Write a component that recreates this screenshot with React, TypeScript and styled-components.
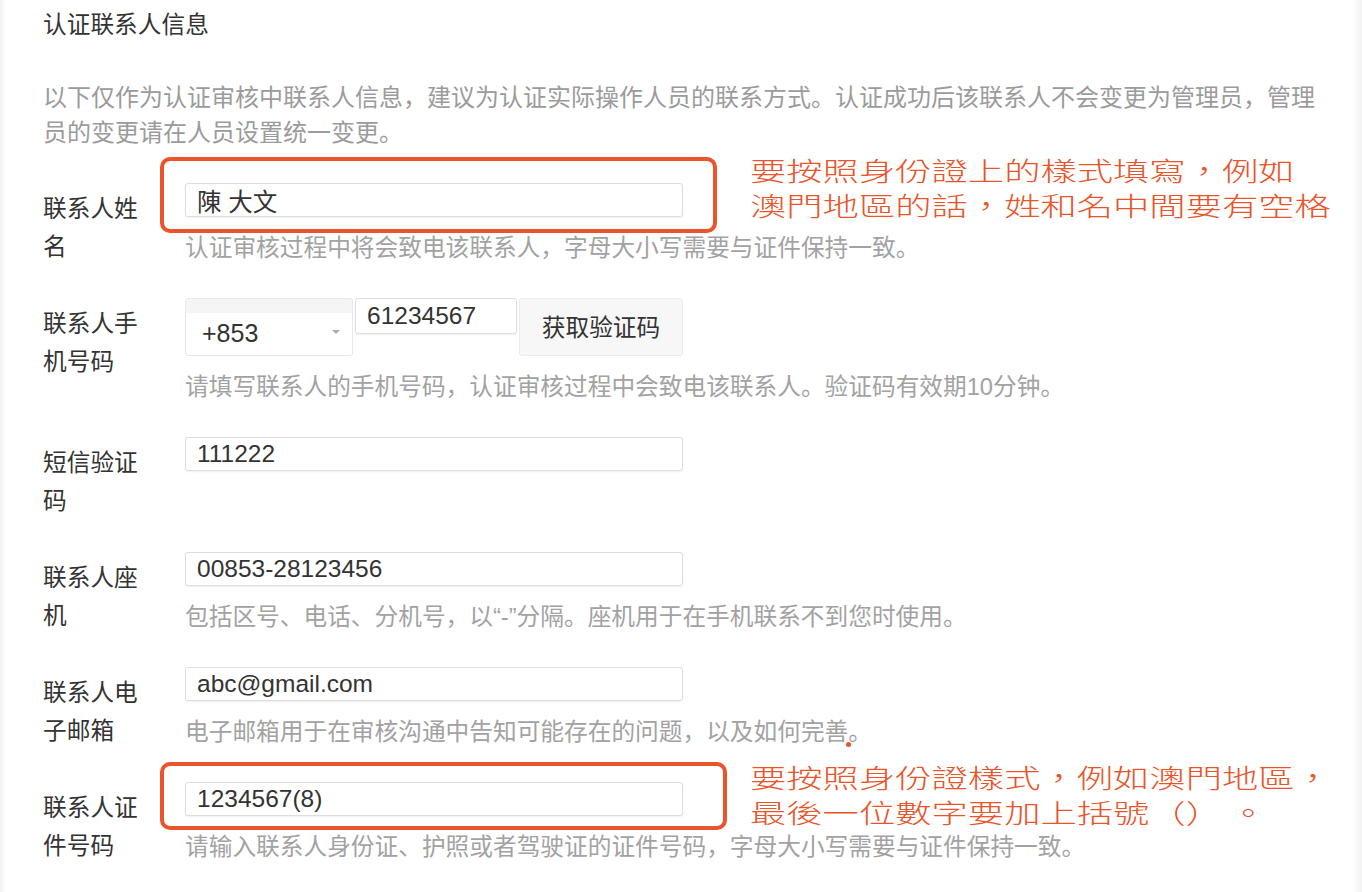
import React from "react";
import styled, { createGlobalStyle } from "styled-components";

const ORANGE = "#e9542a";

const GlobalStyle = createGlobalStyle`
  html, body { margin: 0; padding: 0; background: #ffffff; }
  body {
    font-family: "Liberation Sans", "Noto Sans CJK SC", sans-serif;
    color: #333333;
  }
  * { box-sizing: border-box; }
`;

const Page = styled.div`
  position: relative;
  width: 1362px;
  height: 892px;
  overflow: hidden;
  padding: 0 0 0 43px;
  background: #fff;
  &::before, &::after {
    content: "";
    position: absolute;
    top: 0;
    bottom: 0;
    width: 6px;
  }
  &::before { left: 0; background: linear-gradient(to right, #f1f1f1, #ffffff); }
  &::after { right: 0; width: 10px; background: linear-gradient(to left, #f3f3f3, #ffffff); }
`;

const Title = styled.h2`
  margin: 0;
  font-size: 23.7px;
  font-weight: normal;
  line-height: 51px;
  color: #333;
`;

const Desc = styled.p`
  margin: 29px 0 0;
  max-width: 1285px;
  font-size: 24px;
  line-height: 35px;
  color: #9b9b9b;
`;

const Form = styled.div`
  margin-top: 33px;
  display: flex;
  flex-direction: column;
  gap: 32px;
`;

const Row = styled.div`
  display: grid;
  grid-template-columns: 100px 1fr;
  column-gap: 42px;
  align-items: start;
`;

const Label = styled.div`
  padding-top: 7px;
  font-size: 23.7px;
  line-height: 38px;
  color: #333;
  word-break: break-all;
`;

const Field = styled.div`
  display: flex;
  flex-direction: column;
`;

const Input = styled.div<{ $w?: number; $h?: number }>`
  width: ${(p) => p.$w ?? 498}px;
  height: ${(p) => p.$h ?? 34}px;
  border: 1px solid #dedede;
  border-radius: 3px;
  box-shadow: 0 1px 2px rgba(0, 0, 0, 0.06);
  padding: 0 11px;
  display: flex;
  align-items: center;
  font-size: 24.5px;
  color: #333;
  background: #fff;
  white-space: nowrap;
`;

const Hint = styled.div`
  margin-top: 13px;
  font-size: 23.7px;
  line-height: 36px;
  color: #a2a2a2;
  white-space: nowrap;
`;

const PhoneGroup = styled.div`
  display: flex;
  gap: 2px;
  align-items: flex-start;
`;

const Select = styled.div`
  position: relative;
  width: 168px;
  height: 58px;
  border: 1px solid #e8e8e8;
  border-radius: 3px;
  background: linear-gradient(#f4f5f7 0, #f4f5f7 14px, #ffffff 14px);
  padding: 17px 0 0 16px;
  font-size: 25px;
  line-height: 34px;
  color: #333;
  &::after {
    content: "";
    position: absolute;
    right: 12px;
    top: 31px;
    border-left: 4px solid transparent;
    border-right: 4px solid transparent;
    border-top: 4px solid #aaa;
  }
`;

const CodeButton = styled.div`
  width: 164px;
  height: 58px;
  border: 1px solid #ececec;
  border-radius: 3px;
  background: #f7f7f7;
  display: flex;
  align-items: center;
  justify-content: center;
  padding-bottom: 2px;
  font-size: 23.7px;
  color: #333;
`;

const Box = styled.div<{ $l: number; $t: number; $w: number; $h: number }>`
  position: absolute;
  left: ${(p) => p.$l}px;
  top: ${(p) => p.$t}px;
  width: ${(p) => p.$w}px;
  height: ${(p) => p.$h}px;
  border: 4px solid ${ORANGE};
  border-radius: 10px;
  pointer-events: none;
`;

const Note = styled.div<{ $l: number; $t: number }>`
  position: absolute;
  left: ${(p) => p.$l}px;
  top: ${(p) => p.$t}px;
  font-family: "Noto Sans CJK TC", "Noto Sans CJK SC", sans-serif;
  font-size: 26.5px;
  font-weight: 300;
  line-height: 35px;
  color: ${ORANGE};
  white-space: nowrap;
  transform: scaleX(1.37);
  transform-origin: left top;
`;

const Dot = styled.div`
  position: absolute;
  left: 846px;
  top: 742px;
  width: 5px;
  height: 5px;
  border-radius: 50%;
  background: ${ORANGE};
`;

type RowDef = { label: string; value: string; hint?: string };

const rowsAfter: RowDef[] = [
  { label: "短信验证码", value: "111222" },
  {
    label: "联系人座机",
    value: "00853-28123456",
    hint: "包括区号、电话、分机号，以“-”分隔。座机用于在手机联系不到您时使用。",
  },
  {
    label: "联系人电子邮箱",
    value: "abc@gmail.com",
    hint: "电子邮箱用于在审核沟通中告知可能存在的问题，以及如何完善。",
  },
  {
    label: "联系人证件号码",
    value: "1234567(8)",
    hint: "请输入联系人身份证、护照或者驾驶证的证件号码，字母大小写需要与证件保持一致。",
  },
];

export default function App() {
  return (
    <>
      <GlobalStyle />
      <Page>
        <Title>认证联系人信息</Title>
        <Desc>
          以下仅作为认证审核中联系人信息，建议为认证实际操作人员的联系方式。认证成功后该联系人不会变更为管理员，管理员的变更请在人员设置统一变更。
        </Desc>
        <Form>
          <Row>
            <Label>联系人姓名</Label>
            <Field>
              <Input>陳 大文</Input>
              <Hint>认证审核过程中将会致电该联系人，字母大小写需要与证件保持一致。</Hint>
            </Field>
          </Row>
          <Row>
            <Label>联系人手机号码</Label>
            <Field>
              <PhoneGroup>
                <Select>+853</Select>
                <Input $w={162} $h={36}>61234567</Input>
                <CodeButton>获取验证码</CodeButton>
              </PhoneGroup>
              <Hint>请填写联系人的手机号码，认证审核过程中会致电该联系人。验证码有效期10分钟。</Hint>
            </Field>
          </Row>
          {rowsAfter.map((r) => (
            <Row key={r.label}>
              <Label>{r.label}</Label>
              <Field>
                <Input>{r.value}</Input>
                {r.hint && <Hint>{r.hint}</Hint>}
              </Field>
            </Row>
          ))}
        </Form>

        <Box $l={160} $t={157} $w={557} $h={76} />
        <Note $l={750} $t={152}>
          要按照身份證上的樣式填寫，例如
          <br />
          澳門地區的話，姓和名中間要有空格
        </Note>

        <Box $l={160} $t={762} $w={567} $h={68} />
        <Note $l={750} $t={759}>
          要按照身份證樣式，例如澳門地區，
          <br />
          最後一位數字要加上括號（）&nbsp;。
        </Note>
        <Dot />
      </Page>
    </>
  );
}
